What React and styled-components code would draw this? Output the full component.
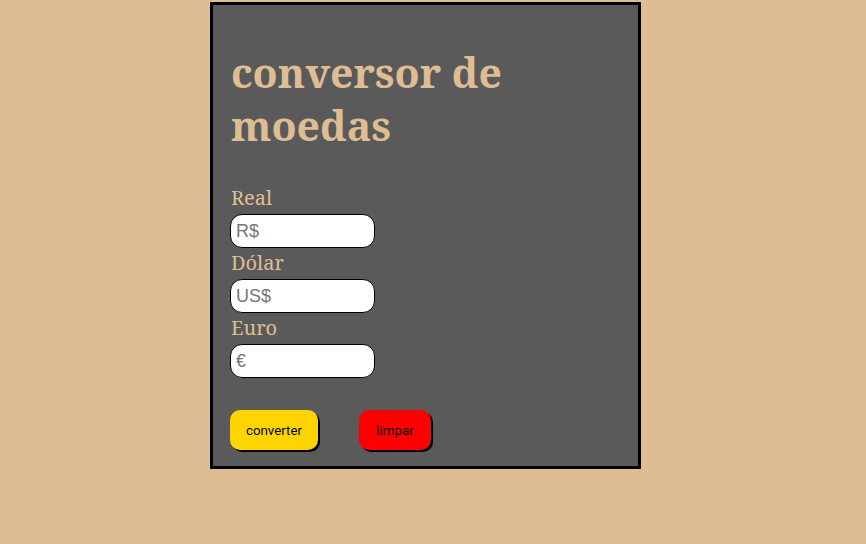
import React from "react";
import styled, { createGlobalStyle } from "styled-components";

const GlobalStyle = createGlobalStyle`
  body {
    margin: 0;
    background: #dfbd93;
    font-family: "Noto Serif", "DejaVu Serif", serif;
  }
`;

const Page = styled.div`
  padding: 2px 0 0 210px;
`;

const Card = styled.div`
  width: 370px;
  height: 423px;
  background: #5a5a5a;
  border: 3px solid #000;
  padding: 18px 38px 20px 17px;
  color: #dfbd93;
`;

const Title = styled.h1`
  font-family: "Noto Serif", "DejaVu Serif", serif;
  font-size: 41px;
  line-height: 53px;
  font-weight: 700;
  margin: 23px 0 34px 1px;
`;

const Label = styled.label`
  display: block;
  font-family: "Noto Serif", "DejaVu Serif", serif;
  font-size: 20px;
  line-height: 24px;
  margin: 0 0 4px 1px;
`;

const Input = styled.input`
  display: block;
  box-sizing: border-box;
  width: 145px;
  height: 34px;
  border: 1px solid #000;
  border-radius: 12px;
  background: #fff;
  padding: 0 5px;
  font-family: "Liberation Sans", Arial, sans-serif;
  font-size: 18px;
  margin-bottom: 3px;
  outline: none;

  &::placeholder {
    color: #757575;
  }
`;

const Actions = styled.div`
  display: flex;
  gap: 41px;
  margin-top: 32px;
`;

const Button = styled.button`
  height: 40px;
  width: ${(p) => p.$w}px;
  padding: 0;
  border: none;
  border-radius: 10px;
  background: ${(p) => p.$bg};
  box-shadow: 2px 2px 0 #000;
  font-family: Roboto, "Liberation Sans", sans-serif;
  font-size: 13.33px;
  color: #000;
  cursor: pointer;
`;

export default function App() {
  return (
    <>
      <GlobalStyle />
      <Page>
        <Card>
          <Title>conversor de moedas</Title>
          <Label>Real</Label>
          <Input placeholder="R$" />
          <Label>Dólar</Label>
          <Input placeholder="US$" />
          <Label>Euro</Label>
          <Input placeholder="€" />
          <Actions>
            <Button $bg="#ffd400" $w={88}>converter</Button>
            <Button $bg="#ff0000" $w={72}>limpar</Button>
          </Actions>
        </Card>
      </Page>
    </>
  );
}
